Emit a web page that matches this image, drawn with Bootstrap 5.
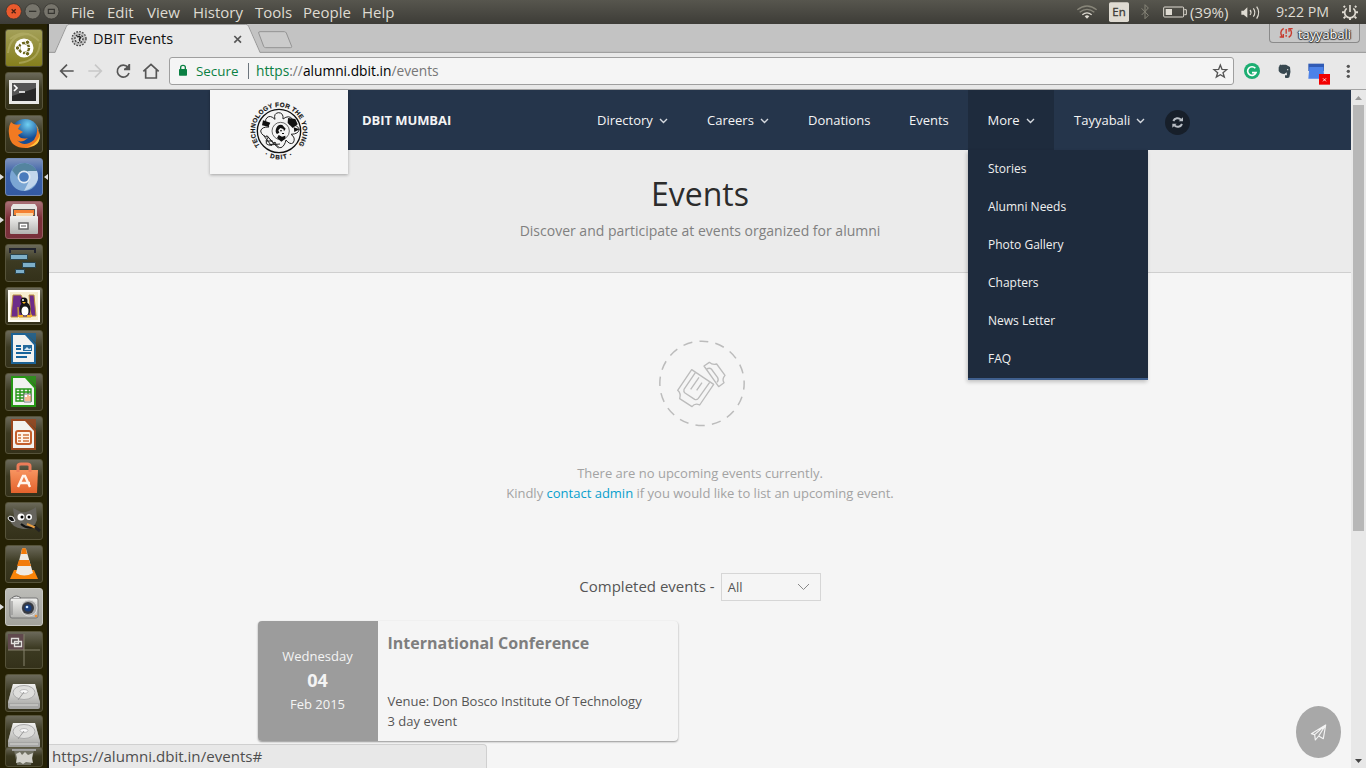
<!DOCTYPE html>
<html lang="en">
<head>
<meta charset="utf-8">
<title>DBIT Events</title>
<meta name="viewport" content="width=device-width, initial-scale=1">
<link href="https://cdn.jsdelivr.net/npm/bootstrap@5.3.0/dist/css/bootstrap.min.css" rel="stylesheet">
<style>
body{font-family:"Open Sans","Noto Sans",sans-serif;font-size:13px;line-height:20px;color:#555;background:#f5f5f5}
.desktop{width:1366px;height:768px}
svg{display:block;flex:none}
.sysbar{height:24px;background:linear-gradient(#57564e,#3d3c37);color:#dfdbd2;font:15px/24px "Open Sans",sans-serif}
.menu-x{width:var(--w);white-space:nowrap;flex:none}
.launcher{width:49px;background:#252104;padding:5px 0 0 5px;gap:5px;border-right:2px solid #17160d}
.tile{width:38px;height:38px;border-radius:3px;border:1px solid #56533a;background:linear-gradient(#6b695a,#3c3a22 45%,#34311a);flex:none}
.tile svg{margin:-1px}
.tile-dash{background:linear-gradient(#a39f58,#857f1d)}
.tile-web{background:linear-gradient(#7d92bd,#3b61a7 40%,#345aa2);border-color:#7289b4}
.tile-files{background:linear-gradient(#a97075,#7d2f38 45%,#78303a);border-color:#945d61}
.tile-cam{background:linear-gradient(#bcbcb8,#a3a39d);border-color:#c7c7c2}
.tile-low{margin-top:-2px;height:35px}
.tile-bin{margin-top:-8px;height:20px;overflow:hidden;opacity:.92}
.tabstrip{height:29px;background:#c3c3c3}
.tabstrip .tabart{position:absolute;left:0;top:0}
.tab-title{position:absolute;left:44px;top:5px;color:#111;font-size:14.5px;white-space:nowrap}
.user-chip{position:absolute;right:6px;top:0;width:91px;height:19px;border:1px solid #8a8a8a;border-top:0;border-radius:0 0 4px 4px;background:#c7c7c7;color:#fff;font-size:12.8px;line-height:20px;text-shadow:0 0 1px #222,1px 0 1px #333,0 1px 1px #333,-1px 0 1px #333}
.toolbar{height:37px;background:#e8e8e8;border-bottom:1px solid #a3a3a3}
.omnibox{width:1065px;height:28px;margin-left:7px;border:1px solid #9f9f9f;border-radius:3px;background:#f5f5f5;font-size:13.75px;color:#777;white-space:nowrap}
.omnibox .ok{color:#0b8043}
.omnibox .url{margin-left:7px}
.site{background:#f5f5f5}
.scroller{width:15px;background:#e8e8e8;flex:none}
.scroller .thumb{height:426px;width:11px;background:#b7b7b7;margin-left:2px}
.site-nav{height:60px;background:#25354b;color:#f4f4f4;flex:none}
.logo-box{width:138px;height:84px;margin-left:161px;background:#f5f5f5;box-shadow:0 1px 3px rgba(0,0,0,.3);z-index:2}
.brand{width:229px;padding-left:14px;font-weight:700;line-height:60px;font-size:13px;letter-spacing:-.07px}
.nav-cell{height:60px;line-height:60px;padding-left:20px;width:var(--w);white-space:nowrap;position:relative;flex:none}
.nav-cell svg{margin:1px 0 0 6px}
.nav-open{background:#1e2b3d;padding-left:19.5px}
.submenu{position:absolute;left:0;top:60px;width:180px;background:#1e2b3d;border-bottom:2px solid #3f5f8e;font-size:12px;box-shadow:-1px 2px 4px rgba(0,0,0,.22);z-index:5}
.submenu a{display:block;height:38px;line-height:38px;padding-left:20px;color:#f0f0f0!important;text-decoration:none}
.sync{width:25px;height:25px;border-radius:50%;background:#171f2a;margin-top:20px}
.hero{height:123px;background:#ebebeb;border-bottom:1px solid #cfcfcf;color:#808080;font-size:14px;flex:none}
.hero h1{font-size:32px;line-height:40px;font-weight:400;color:#2c2c2c;padding-top:24px;margin:0 0 7px}
.empty{color:#a3a3a3;padding-top:57px}
.empty-text{padding-top:23px}
.empty a{color:#089fcd;text-decoration:none}
.filter{margin-top:70px;font-size:15px;gap:6px}
.filter-label{padding-top:3px}
.pick{width:100px;height:28px;border:1px solid #d6d6d6;font-size:13px;padding:0 10px 0 6px}
.event{width:420px;height:120px;margin:20px 0 0 209px;border-radius:4px;box-shadow:0 1px 2px rgba(0,0,0,.4);overflow:hidden}
.event-date{width:120px;background:#9c9c9c;color:#f4f4f4;line-height:24px;padding:0 1px 2px 0}
.event-date b{font-size:18px}
.event h2{font-size:16px;line-height:24px;font-weight:700;color:#7e7e7e;margin:0 0 36px}
.event-info{padding:10px 9.500px}
.send{position:absolute;right:10px;bottom:10px;width:45px;height:52px;border-radius:50%;background:#a8a8a8}
.statusline{position:absolute;left:0;bottom:0;width:438px;height:24px;background:#e8e8e8;border:1px solid #d0d0d0;border-left:0;border-bottom:0;border-radius:0 4px 0 0;padding-left:3px;font-size:15.100px;line-height:23px;color:#4e4e4e}
</style>
</head>
<body>
<svg width="0" height="0" class="position-absolute"><defs>
<linearGradient id="orange" x2="0" y2="1"><stop stop-color="#f79460"/><stop offset="1" stop-color="#e4622c"/></linearGradient>
<linearGradient id="metal" x2="0" y2="1"><stop stop-color="#f1f1ef"/><stop offset="1" stop-color="#b3b3b0"/></linearGradient>
<radialGradient id="globe" cx=".6" cy=".2"><stop stop-color="#6fd0f3"/><stop offset="1" stop-color="#164d95"/></radialGradient>
<symbol id="page" viewBox="0 0 38 38"><path d="M6 3H21L31 14V34H6Z" fill="currentColor"/><path d="M8 5H20L29 15V32H8Z" fill="#f2f2f0"/><path d="M21 3H31V13Z" fill="currentColor" opacity=".8"/></symbol>
<symbol id="disk" viewBox="0 0 38 38"><path d="M8 10H30L35 28V33Q35 35 33 35H5Q3 35 3 33V28Z" fill="#a6a6a4"/><path d="M8 10H30L35 29H3Z" fill="url(#metal)"/><ellipse cx="19" cy="18.5" rx="11" ry="7" fill="#dededc" stroke="#aaa"/><ellipse cx="19" cy="17.5" rx="4" ry="2" fill="#f8f8f8" stroke="#aaa" stroke-width=".7"/><path d="M19 18L13 26" stroke="#999"/><path d="M5 31H33" stroke="#d8d8d5"/></symbol>
<symbol id="chev" viewBox="0 0 9 6"><path d="M1 1L4.500 4.500L8 1" fill="none" stroke="#d5d9df" stroke-width="1.4"/></symbol>
</defs></svg>
<div class="desktop d-flex flex-column overflow-hidden position-relative">
 <header class="sysbar d-flex">
  <svg width="71" height="24" viewBox="0 0 213 72"><circle cx="41" cy="34" r="23" fill="#ea5a2d" stroke="#33322d" stroke-width="2"/><path d="M35 28L47 40M47 28L35 40" stroke="#492113" stroke-width="4"/><circle cx="98" cy="34" r="23" fill="#77756c" stroke="#33322d" stroke-width="2"/><path d="M87 34H109" stroke="#363530" stroke-width="4"/><circle cx="154" cy="34" r="23" fill="#77756c" stroke="#33322d" stroke-width="2"/><path d="M145 28H163V40H145Z" fill="none" stroke="#363530" stroke-width="3.5"/></svg>
  <span class="menu-x" style="--w:36px">File</span><span class="menu-x" style="--w:40px">Edit</span><span class="menu-x" style="--w:46px">View</span><span class="menu-x" style="--w:62px">History</span><span class="menu-x" style="--w:48px">Tools</span><span class="menu-x" style="--w:59px">People</span><span class="menu-x" style="--w:40px">Help</span>
  <svg class="ms-auto" width="114" height="24" viewBox="0 0 342 72"><g transform="translate(-108)" fill="none" stroke="#dfdbd2" stroke-width="4"><g stroke="#878579"><path d="M112 29Q141 7 170 29"/><path d="M119 37Q141 19 163 37"/></g><path d="M127 44Q141 33 155 44"/><path d="M134 49L141 56L148 49Q141 43 134 49" fill="#dfdbd2" stroke="none"/><rect x="207" y="7" width="60" height="59" rx="5" fill="#dfdbd2" stroke="none"/><path d="M305 25L325 46L315 56V14L325 24L305 45" stroke="#878579" stroke-width="3"/><rect x="371" y="21" width="60" height="30" rx="3" stroke-width="3"/><path d="M433 29H439V44H433" stroke-width="3"/><rect x="377" y="27" width="19" height="18" fill="#dfdbd2" stroke="none"/></g><text x="109" y="49" font-size="35" fill="#3c3b37" stroke="#3c3b37" textLength="40" lengthAdjust="spacingAndGlyphs">En</text></svg>
  <span class="menu-x" style="--w:47px;font-size:15px">(39%)</span>
  <svg width="39" height="24" viewBox="591 0 117 72"><path d="M604 32H611L622 22V53L611 44H604Z" fill="#dfdbd2"/><path d="M630 30Q636 37 630 45M640 25Q649 37 640 50M650 20Q662 37 650 56" fill="none" stroke="#dfdbd2" stroke-width="3.6"/></svg>
  <span class="menu-x" style="--w:60px;font-size:14.200px">9:22 PM</span>
  <svg width="30" height="24" viewBox="888 0 90 72"><g fill="none" stroke="#dfdbd2"><path d="M920 25A16 16 0 1 0 940 25" stroke-width="5"/><path d="M930 15V36" stroke-width="5"/><path d="M915 22L911 18M945 22L949 18M913 37H906M947 37H954M916 50L911 55M944 50L949 55M930 53V60" stroke-width="6"/></g></svg>
 </header>
 <div class="d-flex flex-grow-1">
  <aside class="launcher d-flex flex-column position-relative">
   <div class="tile tile-dash"><svg width="38" height="38"><g fill="none" stroke="#b8b36c" stroke-width="2" opacity=".6"><path d="M3 24Q5 5 24 5M35 14Q34 32 14 34M5 10Q20-2 34 12"/></g><circle cx="19" cy="19" r="9.500" fill="#fff"/><circle cx="19" cy="19" r="5" fill="none" stroke="#6b661c" stroke-width="2.5" stroke-dasharray="8.7 1.8"/><g fill="#6b661c" stroke="#fff"><circle cx="12.5" cy="19" r="2.2"/><circle cx="22.5" cy="13.3" r="2.2"/><circle cx="22.5" cy="24.7" r="2.2"/></g></svg></div>
   <div class="tile"><svg width="38" height="38"><path d="M4 8H34V32H4Z" fill="#e8e8e6"/><path d="M7 11H31V29H7Z" fill="#282828"/><path d="M7 11H31V16L7 24Z" fill="#555"/><path d="M9 13L12 16L9 19M14 20H20" fill="none" stroke="#fff" stroke-width="1.7"/></svg></div>
   <div class="tile"><svg width="38" height="38"><circle cx="20" cy="18" r="14" fill="url(#globe)"/><path d="M6 7Q9 11 16 9L13 14L18 17L13 20Q16 25 23 23Q16 29 12 25Q19 33 29 25Q34 18 31 10Q41 30 23 33Q5 34 4 19Q3 12 6 7" fill="#f27a22"/><path d="M31 10Q35 14 34 22Q30 30 22 32Q38 31 34 16" fill="#ffc83f"/></svg></div>
   <div class="tile tile-web"><svg width="38" height="38"><circle cx="19" cy="19" r="14" fill="#7ba6d3"/><path d="M7 12Q12 5 20 5Q28 6 32 13H19Q13 14 13 20Z" fill="#54849f"/><path d="M19 33L25 21L23 13H32Q37 27 19 33" fill="#c1d6ec"/><circle cx="19" cy="19" r="6.500" fill="#e2ebf4"/><circle cx="19" cy="19" r="4.800" fill="#4a7bbc"/></svg></div>
   <div class="tile tile-files"><svg width="38" height="38"><path d="M6 6L8 3H30L32 6V18H6Z" fill="#e6e5e1"/><path d="M8 8H30V17H8Z" fill="#595650"/><path d="M9 9H29V14H9Z" fill="#f48132"/><path d="M11 12H28V15H11Z" fill="#f9d6a7"/><rect x="5" y="15" width="28" height="18" rx="1" fill="url(#metal)"/><rect x="14" y="22" width="9" height="6" fill="#fff" stroke="#666" stroke-width="1.500"/><path d="M16 25H21" stroke="#555"/></svg></div>
   <div class="tile"><svg width="38" height="38"><path d="M5 9V5H30V9" fill="none" stroke="#22232e" stroke-width="2"/><g fill="#7eafc8" stroke="#29434d"><path d="M5.500 10.500H22.500V15.500H5.500ZM17.500 18.500H30.500V23.500H17.500ZM10.500 25.500H19.500V29.500H10.500Z"/></g></svg></div>
   <div class="tile"><svg width="38" height="38"><path d="M3 3H35V35H3Z" fill="#fffdf5"/><path d="M5 5H33V33H5Z" fill="#f6edcf"/><path d="M6 30L8 8H16L27 29H31L29 8H24L26 30H14L13 20V30Z" fill="#6d2c88" stroke="#bd913c"/><ellipse cx="20" cy="22" rx="5.500" ry="7" fill="#171717"/><ellipse cx="20" cy="24" rx="3.500" ry="4.500" fill="#fff"/><circle cx="19" cy="14" r="3.500" fill="#111"/><circle cx="18" cy="13" r="1" fill="#fff"/><path d="M17 15H21L19 17ZM13 28H18V30H13ZM22 28H27V30H22Z" fill="#f4b123"/></svg></div>
   <div class="tile"><svg width="38" height="38" color="#1c6396"><use href="#page"/><path d="M11 16H16M11 19H16M11 23H26M11 27H22" stroke="#17649b" stroke-width="2"/><path d="M18 15H27V21H18Z" fill="#246a9c"/><path d="M19 20L22 17L24 19L26 18V20Z" fill="#d6e8f5"/></svg></div>
   <div class="tile"><svg width="38" height="38" color="#269714"><use href="#page"/><path d="M11 16H26V28H11ZM11 19H26M11 22H26M11 25H26M15 16V28M19 16V28M23 16V28" fill="none" stroke="#279819" stroke-width="1.400"/><path d="M19 21H26V29H19Z" fill="#fff" stroke="#777"/><path d="M21 28V24M23 28V22M25 28V23" stroke="#f17928"/></svg></div>
   <div class="tile"><svg width="38" height="38" color="#9b461d"><use href="#page"/><rect x="11" y="15" width="15" height="13" rx="2" fill="#fff3e8" stroke="#c45f2c" stroke-width="2"/><path d="M13 19H16M13 22H16M13 25H16M18 19H24M18 22H24M18 25H24" stroke="#ce743d" stroke-width="1.500"/></svg></div>
   <div class="tile"><svg width="38" height="38"><path d="M5 11H33L32 34H6Z" fill="url(#orange)"/><path d="M13 13V7Q13 5 16 5H22Q25 5 25 7V13" fill="none" stroke="#ec7c59" stroke-width="3"/><path d="M13 28L18 17H20L25 28M14 24H25" fill="none" stroke="#fff4ec" stroke-width="2.400"/></svg></div>
   <div class="tile"><svg width="38" height="38"><path d="M9 14L8 6L16 10Q23 11 31 5L32 18Q29 28 18 27Q6 25 5 18Z" fill="#66645d"/><path d="M3 16Q4 13 8 15L10 19Q7 21 4 18Z" fill="#111" stroke="#eee"/><circle cx="16" cy="15" r="3.500" fill="#fff"/><circle cx="24" cy="15" r="3" fill="#fff"/><circle cx="17" cy="15" r="1.500"/><circle cx="24" cy="15" r="1.500"/><path d="M16 22Q23 28 31 24" fill="none" stroke="#111" stroke-width="2"/><path d="M22 22L31 26" stroke="#e59c42" stroke-width="2"/><path d="M30 25L35 29" stroke="#222" stroke-width="3"/></svg></div>
   <div class="tile"><svg width="38" height="38"><path d="M9 25H29L33 34H5Z" fill="#f98408"/><path d="M17 4Q19 2 21 4L28 28Q19 33 11 28Z" fill="#eeeae4"/><path d="M17 4Q19 2 21 4L22 9H16ZM14 15H24L26 21H12Z" fill="#f27b0b"/></svg></div>
   <div class="tile tile-cam"><svg width="38" height="38"><rect x="5" y="10" width="28" height="20" rx="2" fill="url(#metal)" stroke="#777"/><path d="M7 10Q11 6 16 10" fill="#e7e7e7" stroke="#666"/><circle cx="24" cy="20" r="8" fill="#aaa" stroke="#ddd"/><circle cx="23" cy="20" r="6" fill="#373a42"/><circle cx="23" cy="20" r="3.500" fill="#183d7c"/><circle cx="22" cy="19" r="1.300" fill="#cce6ff"/><path d="M7 13V27" stroke="#888"/><circle cx="31" cy="28" r="1.300" fill="#ee9237"/></svg></div>
   <div class="tile"><svg width="38" height="38"><path d="M3 3H19V19H3Z" fill="#60494d"/><path d="M19 3V35M3 19H35" stroke="#85826d"/><path d="M6.500 7.500H13.500V12.500H6.500ZM9.500 10.500H16.500V15.500H9.500Z" fill="#51494a" stroke="#e1dfdc" stroke-width="1.3"/></svg></div>
   <div class="tile"><svg width="38" height="38"><use href="#disk"/></svg></div>
   <div class="tile tile-low"><svg width="38" height="36"><use href="#disk" width="38" height="38" y="-2"/></svg></div>
   <div class="tile tile-bin"><svg width="38" height="20"><path d="M9 3H29L26 18H12Z" fill="#77776b"/><path d="M7 2H31V4H7Z" fill="#aaa"/><path d="M11 7L15 5L17 8L20 5L23 8L28 6L27 11L28 16L21 15L18 17L15 15L11 16L12 11Z" fill="#e2e2dc"/></svg></div>
   <svg class="position-absolute start-0 top-0" width="49" height="744"><path d="M0 150L4 153L0 156ZM48 150L44 153L48 156ZM0 193L4 196L0 199ZM0 580L4 583L0 586Z" fill="#dedede"/></svg>
  </aside>
  <main class="flex-grow-1 d-flex flex-column position-relative">
   <div class="tabstrip position-relative">
    <svg class="tabart" width="1317" height="29" viewBox="147 72 3951 87"><path d="M147 157H165L200 78Q203 73 208 73H737Q742 73 745 78L780 157H4098" fill="none" stroke="#999" stroke-width="3"/><path d="M166 159L201 79Q203 75 208 75H737Q742 75 744 79L779 159Z" fill="#e8e8e8"/><path d="M780 95H853Q857 95 859 99L875 139Q876 143 871 143H797Q793 143 791 139L776 99Q775 95 780 95Z" fill="#cbcbcb" stroke="#949494" stroke-width="3"/><path d="M703 108L723 128M723 108L703 128" stroke="#555" stroke-width="5"/><circle cx="237" cy="116" r="21" fill="#c0c0c0" stroke="#444" stroke-width="4" stroke-dasharray="5 4"/><circle cx="237" cy="116" r="12" fill="#ddd" stroke="#333" stroke-width="4" stroke-dasharray="5 4"/><path d="M231 111Q239 107 242 113Q236 117 240 124" stroke="#222" stroke-width="4" fill="none"/></svg>
    <span class="tab-title">DBIT Events</span>
    <div class="user-chip d-flex"><svg class="ms-2" width="16" height="19" viewBox="711 76 48 57"><g fill="none" stroke="#c73a2e" stroke-width="4"><path d="M728 89Q714 98 723 113M716 115H727V106M743 116Q757 107 748 92M755 90H744V99"/><path d="M735.500 91V105M735.500 109V114"/></g></svg><span class="ms-1">tayyabali</span></div>
   </div>
   <div class="toolbar d-flex align-items-center">
    <svg width="113" height="36" viewBox="147 159 339 108"><g fill="none" stroke="#555" stroke-width="5"><path d="M221 213H184M201 194L182 213L201 232"/><path d="M265 213H302M285 194L304 213L285 232" stroke="#c8c8c8"/><path d="M384 202A18 18 0 1 0 387 219"/><path d="M388 192V208H372" fill="#555"/><path d="M430 214L453 193L476 214M437 210V234H469V210"/></g></svg>
    <div class="omnibox d-flex align-items-center">
     <svg width="26" height="26" viewBox="510 174 78 78"><rect x="537" y="207" width="24" height="20" rx="2" fill="#0b8043"/><path d="M542 208V202Q542 196 549 196Q556 196 556 202V208" fill="none" stroke="#0b8043" stroke-width="4"/></svg>
     <span class="ok menu-x" style="--w:52px;font-size:13.400px">Secure</span><span class="border-start border-secondary" style="height:16px"></span>
     <span class="url"><span class="ok">https</span>://<span class="text-black">alumni.dbit.in</span>/events</span>
     <svg class="ms-auto" width="26" height="26" viewBox="500 174 78 78"><path d="M540 195L545 208L559 209L548 218L552 231L540 224L528 231L532 218L521 209L535 208Z" fill="none" stroke="#555" stroke-width="4"/></svg>
    </div>
    <svg width="132" height="36" viewBox="582 159 396 108"><circle cx="636" cy="213" r="24" fill="#1cae72"/><path d="M646 205A13 13 0 1 0 648 218H636" fill="none" stroke="#fff" stroke-width="5"/><path d="M716 202L725 194H738L750 201Q754 217 748 232Q744 236 735 233V226H741L740 217L733 222Q721 222 716 213ZM716 199L723 193V200Z" fill="#37474f"/><circle cx="743" cy="209" r="2" fill="#e8e8e8"/><rect x="805" y="191" width="47" height="22" fill="#315bb5"/><path d="M808 201H850L853 236H805Z" fill="#4c82e8"/><rect x="837" y="222" width="33" height="32" fill="#f20000"/><path d="M849 235L858 244M858 235L849 244" stroke="#fff" stroke-width="2.500"/><g fill="#555"><circle cx="925" cy="199" r="5"/><circle cx="925" cy="214" r="5"/><circle cx="925" cy="229" r="5"/></g></svg>
   </div>
   <div class="d-flex flex-grow-1">
    <div class="site flex-grow-1 d-flex flex-column position-relative">
     <nav class="site-nav d-flex">
      <div class="logo-box position-relative flex-shrink-0"><svg width="138" height="84" viewBox="30 12 414 252"><defs><path id="arcTop" d="M180 179A72 72 0 1 1 294 179"/><path id="arcLow" d="M154 137A83 83 0 0 0 320 137"/></defs><circle cx="237" cy="135" r="65" fill="none" stroke="#111" stroke-width="4"/><g font-family="Liberation Sans,sans-serif" font-weight="700" font-size="19" fill="#111" stroke="#111" stroke-width=".5"><text textLength="318"><textPath href="#arcTop" textLength="318">TECHNOLOGY FOR THE YOUNG</textPath></text><text text-anchor="middle" letter-spacing="3"><textPath href="#arcLow" startOffset="50%">· DBIT ·</textPath></text></g><g fill="none" stroke="#222" stroke-width="3"><path d="M225 100Q220 82 235 80Q251 80 249 99Q267 85 278 100Q280 108 269 115Q294 117 298 130Q296 144 273 145Q288 155 280 170Q270 178 258 162Q254 180 243 185Q232 186 225 168Q210 183 199 173Q195 162 206 154Q184 150 182 135Q185 122 207 123Q190 105 201 95Q211 86 225 100"/><circle cx="242" cy="135" r="26" stroke-width="2"/><path d="M192 150L215 180M200 148L228 179M210 161L236 187M198 165H218M208 177L240 174"/></g><path d="M229 126Q235 113 247 117L257 128L252 136L250 129L241 126L235 133L238 140L231 144Q224 138 229 126ZM236 147L246 152L256 149V158L244 167L231 156ZM240 133H246V136H240ZM246 141H252V144H246ZM264 96L286 99L293 115L278 126L263 111ZM189 103L211 110L205 122L186 118ZM281 124L299 130L283 138Z" fill="#111"/></svg></div>
      <div class="brand flex-shrink-0">DBIT MUMBAI</div>
      <div class="nav-cell d-flex align-items-center" style="--w:110px">Directory<svg width="9" height="6"><use href="#chev"/></svg></div>
      <div class="nav-cell d-flex align-items-center" style="--w:101px">Careers<svg width="9" height="6"><use href="#chev"/></svg></div>
      <div class="nav-cell" style="--w:101px">Donations</div>
      <div class="nav-cell" style="--w:79px">Events</div>
      <div class="nav-cell nav-open d-flex align-items-center" style="--w:86px">More<svg width="9" height="6"><use href="#chev"/></svg>
       <div class="submenu"><a>Stories</a><a>Alumni Needs</a><a>Photo Gallery</a><a>Chapters</a><a>News Letter</a><a>FAQ</a></div>
      </div>
      <div class="nav-cell d-flex align-items-center" style="--w:111px">Tayyabali<svg width="9" height="6"><use href="#chev"/></svg></div>
      <div class="sync"><svg width="25" height="25" viewBox="614 72 75 75"><g fill="none" stroke="#b9bec5" stroke-width="6"><path d="M639 105A14 14 0 0 1 662 101M665 114A14 14 0 0 1 642 118"/></g><path d="M668 94V106H655ZM636 125V113H649Z" fill="#b9bec5"/></svg></div>
     </nav>
     <section class="hero text-center"><h1>Events</h1>Discover and participate at events organized for alumni</section>
     <section class="empty text-center"><svg class="mx-auto" width="120" height="110" viewBox="0 0 360 330"><g fill="none" stroke="#bcbcbc" stroke-width="4" stroke-linejoin="round"><circle cx="186" cy="160" r="126.500" stroke-dasharray="28 21.680" stroke-dashoffset="9" transform="rotate(-90 186 160)" stroke-width="4.500"/><path d="M155 119L221 163L179 225Q165 218 156 230L119 206Q124 190 113 181Z"/><path d="M166 128L132 178Q130 185 135 189L164 208Q170 211 175 205L209 157M177 142L152 178M186 158L170 181M192 108L208 97Q218 106 230 102L255 136Q245 147 252 158L236 170Z"/><path d="M199 118Q208 112 214 117L233 143Q237 151 231 157"/></g></svg><div class="empty-text">There are no upcoming events currently.<br>Kindly <a href="#">contact admin</a> if you would like to list an upcoming event.</div></section>
     <div class="filter d-flex justify-content-center"><span class="filter-label">Completed events -</span><div class="pick d-flex align-items-center justify-content-between">All<svg width="13" height="8" viewBox="0 0 13 8"><path d="M1 1L6.500 6.500L12 1" fill="none" stroke="#888"/></svg></div></div>
     <article class="event d-flex"><div class="event-date d-flex flex-column align-items-center justify-content-center"><span>Wednesday</span><b>04</b><span>Feb 2015</span></div><div class="event-info"><h2>International Conference</h2>Venue: Don Bosco Institute Of Technology<br>3 day event</div></article>
     <div class="send d-flex align-items-center justify-content-center"><svg width="17" height="17" viewBox="91 102 51 51"><path d="M95 131L138 105L131 146L117 138L107 150L105 134Z M105 134L138 105L117 138" fill="none" stroke="#f4f4f4" stroke-width="3.500" stroke-linejoin="round"/></svg></div>
     <div class="statusline">https://alumni.dbit.in/events#</div>
    </div>
    <div class="scroller d-flex flex-column"><svg width="15" height="15"><path d="M4 10L7.500 6L11 10Z" fill="#999"/></svg><div class="thumb"></div><svg class="mt-auto" width="15" height="15"><path d="M4 6H11L7.500 10Z" fill="#444"/></svg></div>
   </div>
  </main>
 </div>
</div>
<script src="https://cdn.jsdelivr.net/npm/bootstrap@5.3.0/dist/js/bootstrap.bundle.min.js"></script>
</body>
</html>
